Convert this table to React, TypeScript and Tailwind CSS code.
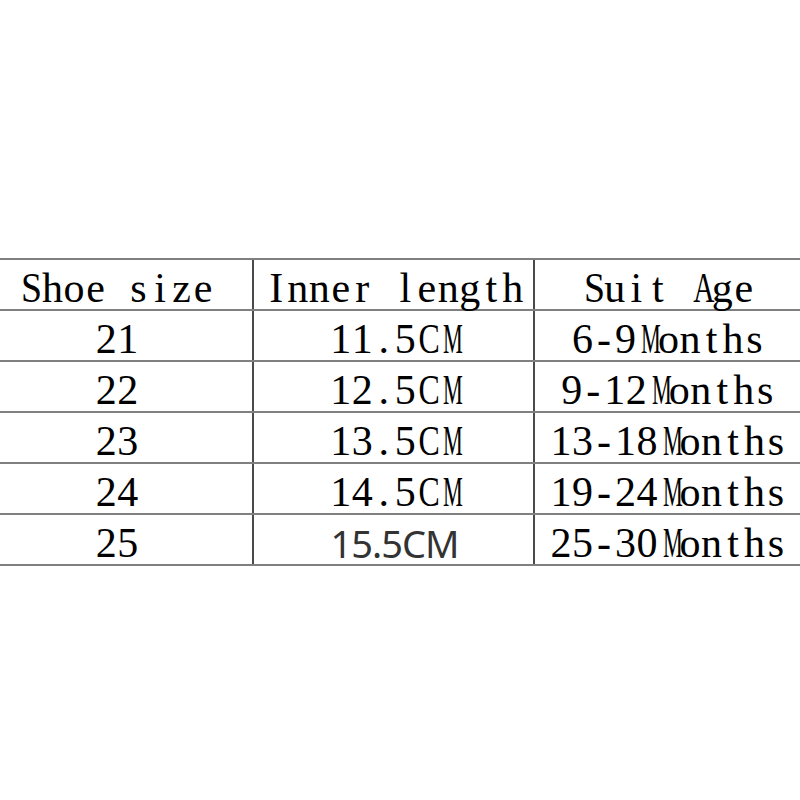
import React from "react";

// Sizing chart rows
const HEADER = ["Shoe size", "Inner length", "Suit Age"];
const ROWS: { size: string; length: string; age: string; sansLength?: boolean }[] = [
  { size: "21", length: "11.5CM", age: "6-9Months" },
  { size: "22", length: "12.5CM", age: "9-12Months" },
  { size: "23", length: "13.5CM", age: "13-18Months" },
  { size: "24", length: "14.5CM", age: "19-24Months" },
  { size: "25", length: "15.5CM", age: "25-30Months", sansLength: true },
];

// wide serif capitals squeezed into the half-width cell
const SQUEEZE: Record<string, string> = {
  M: "scale-x-[0.53]",
  C: "scale-x-[0.76]",
  A: "scale-x-[0.7]",
  S: "scale-x-[0.9]",
};

// SimSun-style half-width text: every glyph gets the same advance
function Mono({ text }: { text: string }) {
  return (
    <span className="inline-flex font-['Liberation_Serif',serif] text-[42px] leading-none text-black">
      {text.split("").map((ch, i) => (
        <span key={i} className={"inline-block w-[21.5px] text-center " + (SQUEEZE[ch] ?? "")}>
          {ch === " " ? "\u00a0" : ch}
        </span>
      ))}
    </span>
  );
}

function Row({ cells, sansMiddle }: { cells: string[]; sansMiddle?: boolean }) {
  return (
    <div className="grid h-[51px] grid-cols-[252px_281px_1fr] border-b-2 border-[#808080]">
      <div className="flex items-center justify-center pr-[18px] pt-[6px]">
        <Mono text={cells[0]} />
      </div>
      <div className="flex items-center justify-center border-l-2 border-[#4a4a4a] pl-[2px] pt-[6px]">
        {sansMiddle ? (
          <span className="font-['Noto_Sans',sans-serif] text-[38px] leading-none tracking-[-1px] text-[#333]">
            {cells[1]}
          </span>
        ) : (
          <Mono text={cells[1]} />
        )}
      </div>
      <div className="flex items-center justify-center border-l-2 border-[#4a4a4a] pl-[2px] pt-[6px]">
        <Mono text={cells[2]} />
      </div>
    </div>
  );
}

export default function App() {
  return (
    <div className="h-[800px] w-[800px] bg-white pt-[258px]">
      <div className="border-t-2 border-[#808080]">
        <Row cells={HEADER} />
        {ROWS.map((r) => (
          <Row key={r.size} cells={[r.size, r.length, r.age]} sansMiddle={r.sansLength} />
        ))}
      </div>
    </div>
  );
}
